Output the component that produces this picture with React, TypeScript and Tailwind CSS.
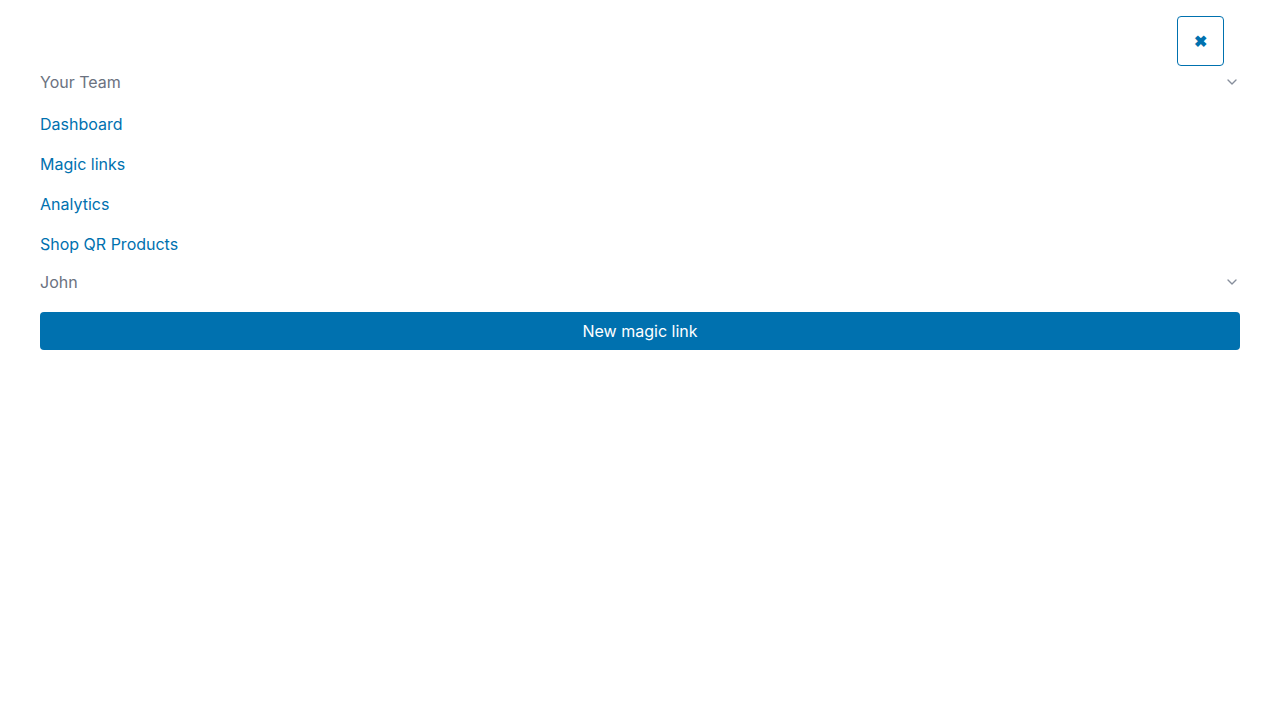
import { ChevronDown } from "lucide-react";

const links = ["Dashboard", "Magic links", "Analytics", "Shop QR Products"];

function MenuToggle({ label }: { label: string }) {
  return (
    <button type="button" className="flex h-8 w-full items-center justify-between text-[#6b7280]">
      {label}
      <ChevronDown className="size-4 text-[#878e9c]" aria-hidden="true" />
    </button>
  );
}

export default function App() {
  return (
    <div className="min-h-screen bg-white px-10 pt-4 font-['Inter',sans-serif] text-base antialiased">
      <div className="flex justify-end pr-4">
        <button
          type="button"
          aria-label="Close menu"
          className="flex h-[50px] items-center rounded border border-[#0071af] px-4 font-bold text-[#0071af]"
        >
          ✖
        </button>
      </div>
      <nav>
        <MenuToggle label="Your Team" />
        <ul className="pt-1.5 pb-0.5">
          {links.map((link) => (
            <li key={link}>
              <a href="#" className="block py-2 text-[#0071af]">
                {link}
              </a>
            </li>
          ))}
        </ul>
        <MenuToggle label="John" />
        <button type="button" className="mt-3.5 h-[38px] w-full rounded bg-[#0071af] text-white">
          New magic link
        </button>
      </nav>
    </div>
  );
}
